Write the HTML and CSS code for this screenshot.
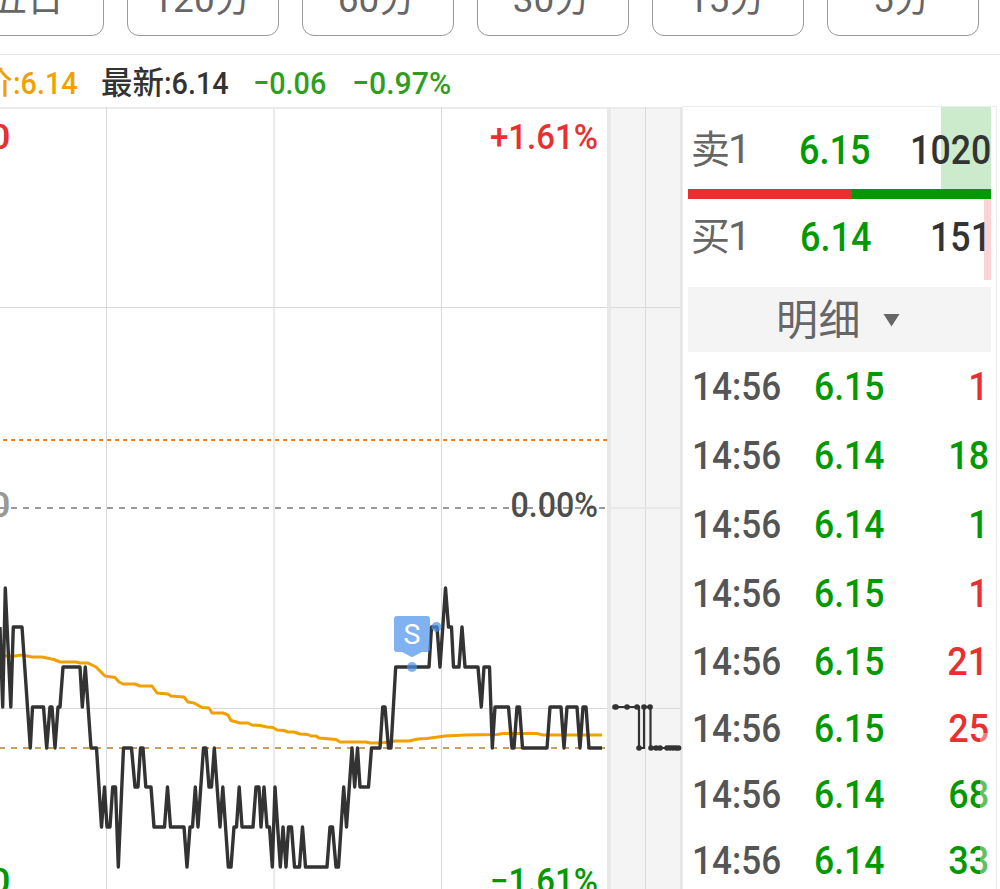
FILE: index.html
```html
<!DOCTYPE html>
<html lang="zh-CN">
<head>
<meta charset="utf-8">
<title>分时</title>
<link rel="stylesheet" href="styles.css">
</head>
<body>
<div class="app">
  <nav class="periods">
    <span class="period">五日</span>
    <span class="period">120分</span>
    <span class="period">60分</span>
    <span class="period">30分</span>
    <span class="period">15分</span>
    <span class="period">5分</span>
  </nav>
  <header class="summary">
    <span class="avg"><span class="cjk">价</span><span class="num">:6.14</span></span>
    <span class="last"><span class="cjk">最新</span><span class="num">:6.14</span></span>
    <span class="diff"><span class="num">−0.06</span></span>
    <span class="pct"><span class="num wide">−0.97%</span></span>
  </header>
  <main class="board">
    <svg class="chart" viewBox="0 106 682 783" width="682" height="783">
      <rect x="607" y="107" width="75" height="782" fill="#f4f4f4"/>
      <path class="frame" d="M0 108H682M274 107V889"/>
      <path class="grid" d="M0 307.5H682M0 708.5H682M106.5 107V889M441.5 107V889M645.5 107V889"/>
      <path d="M609 508H682" stroke="#e8e8e8" stroke-width="2"/>
      <path class="open" d="M3 440H607"/>
      <path class="prev" d="M-1 508H606"/>
      <path class="low" d="M-1 748H605"/>
      <path class="grid" d="M106.5 430V450M441.5 430V450"/>
      <rect x="607" y="107" width="4" height="782" fill="#e8e8e8"/>
      <rect x="680" y="107" width="2" height="782" fill="#e6e6e6"/>
      <polyline class="average" points="0,656 15,656 22,655 32,657 42,657 54,659.5 60,662 76,662 80,663 88,663 96,667 105,676 115,677.5 119,682 123,684 135,684 140,686 152,686 157,693 168,694 171,696 184,697 188,702 194,703 202,707.5 209,708 212,713 223,713 228,715 231,720.5 240,723 248,723 252,725 260,725.5 267,727 273,727.5 277,730 284,730.5 288,732 294,732 300,734 308,734.5 311,736 316,736 319,738 336,739.5 340,742 366,742 370,743 380,743 390,742 395,741 409,741 418,739 427,738.5 438,737 445,736 455,735.5 465,735 497,734.5 503,733.5 537,733.5 543,735 602,735"/>
      <polyline class="price" points="0,627 2.7,707 5.3,588 10.8,707 13.3,627 22,627 30.3,748 32.5,707 43.5,707 46.7,748 50,707 52,707 55,748 58,707 60,707 63,667 80,667 82.3,707 85.3,667 91,748 96.5,748 101.5,827 104.5,787 107,827 110,827 112.7,787 115.5,787 118.3,867 123.5,748 131.5,748 135,787 138,787 140.5,748 143,748 145.8,787 151,787 154,827 164.5,827 167.5,787 170.5,827 184,827 187,867 190,827 192.5,827 195.3,787 198,827 203.5,748 206,748 209,787 211.5,787 214.3,748 220,827 222.8,787 228.3,867 231,867 234,827 236.5,827 239.2,787 242,827 253,827 256,787 259,787 261,827 264,787 267,827 269.5,827 272.3,867 275,787 280.3,867 283,827 286,867 288.5,827 291.5,827 294.5,867 299.5,867 302.5,827 305.5,867 327,867 330,827 332.5,827 336,867 338.5,867 343.7,787 346.5,827 352,748 354.7,787 357.5,748 360,787 368.5,787 371.5,748 380,748 382.7,707 385,707 388.5,748 391,748 395.7,667 429,667 431.5,627 437,627 440,667 445.5,588 448.5,627 451.5,627 453.5,667 459,667 462,627 465,667 478,667 481.3,707 484,667 489.5,667 492.3,748 495,707 508.5,707 512,748 514,748 517,707 519.5,707 522.5,748 547,748 550,707 561,707 564,748 567,707 577,707 580,748 583,707 586,707 589,748 602,748"/>
      <polyline class="auction" points="615,707 639,707 639,748 644,748 644,707 650.5,707 650.5,748 679,748"/>
      <path class="ticks" d="M615 707h.1M616 707h.1M627 707h.1M637 707h.1M644 707h.1M650 707h.1M639 748h.1M651 748h.1M656 748h.1M660 748h.1M667 748h.1M670 748h.1M673 748h.1M676 748h.1M678.5 748h.1"/>
      <g class="marker">
        <path d="M397 616H427Q430 616 430 619V649Q430 652 427 652H422L414 656.3Q412 657.5 410 656.3L402 652H397Q394 652 394 649V619Q394 616 397 616Z"/>
        <circle cx="412" cy="667" r="5"/>
        <circle cx="436.5" cy="627" r="5"/>
      </g>
      <text class="sell" x="412" y="643.5" text-anchor="middle">S</text>
      <text class="axis up" x="10.5" y="149" text-anchor="end" textLength="77" lengthAdjust="spacingAndGlyphs">6.30</text>
      <text class="axis mid" x="10.5" y="517" text-anchor="end" textLength="77" lengthAdjust="spacingAndGlyphs">6.20</text>
      <text class="axis down" x="10.5" y="893" text-anchor="end" textLength="77" lengthAdjust="spacingAndGlyphs">6.10</text>
      <text class="axis up" x="490" y="149" textLength="108" lengthAdjust="spacingAndGlyphs">+1.61%</text>
      <text class="axis zero" x="510.5" y="517" textLength="87.5" lengthAdjust="spacingAndGlyphs">0.00%</text>
      <text class="axis down" x="490" y="893" textLength="108" lengthAdjust="spacingAndGlyphs">−1.61%</text>
    </svg>
    <aside class="panel">
      <div class="quote ask">
        <span class="side">卖<i>1</i></span><span class="price-num">6.15</span><span class="vol">1020</span>
      </div>
      <div class="ratio"><i class="buy"></i><i class="sellbar"></i></div>
      <div class="quote bid">
        <span class="side">买<i>1</i></span><span class="price-num">6.14</span><span class="vol">151</span>
      </div>
      <div class="tab"><span>明细</span><svg width="17" height="13" viewBox="0 0 17 13"><path d="M0.5 0H16.5L8.5 12.5Z" fill="#666"/></svg></div>
      <div class="trades">
        <div class="trade"><span>14:56</span><b>6.15</b><em class="up one">1</em></div>
        <div class="trade"><span>14:56</span><b>6.14</b><em>18</em></div>
        <div class="trade"><span>14:56</span><b>6.14</b><em class="one">1</em></div>
        <div class="trade"><span>14:56</span><b>6.15</b><em class="up one">1</em></div>
        <div class="trade"><span>14:56</span><b>6.15</b><em class="up one">21</em></div>
        <div class="trade"><span>14:56</span><b>6.15</b><em class="up">25</em></div>
        <div class="trade"><span>14:56</span><b>6.14</b><em>68</em></div>
        <div class="trade"><span>14:56</span><b>6.14</b><em>33</em></div>
        <div class="veil"></div>
      </div>
    </aside>
  </main>
</div>
</body>
</html>
```
FILE: styles.css
```css
* { box-sizing: border-box; }
body { margin: 0; background: #fff; font-family: Roboto, "Noto Sans CJK SC", sans-serif; }
.app { width: 1000px; height: 889px; overflow: hidden; display: flex; flex-direction: column; }

.periods { height: 55px; flex: none; display: flex; gap: 23px; margin-left: -48px; width: 1048px; border-bottom: 1px solid #e6e6e6; align-items: flex-end; padding-bottom: 18px; }
.period { width: 152px; height: 76px; flex: none; border: 1px solid #999; border-radius: 12px; display: flex; align-items: center; justify-content: center; font-size: 37px; line-height: 40px; color: #666; padding: 3px 2px 0 0; }

.summary { height: 51px; flex: none; display: flex; align-items: baseline; font-size: 32px; font-weight: 500; line-height: 46px; white-space: nowrap; padding-top: 2px; }
.cjk { font-family: "Noto Sans CJK SC", sans-serif; font-size: 31.5px; }
.num { display: inline-block; transform: scaleX(.9); transform-origin: left; }
.num.wide { transform: scaleX(.945); }
.avg { color: #f0a000; width: 101px; margin-left: -19px; flex: none; }
.last { color: #333; width: 152px; margin-left: 19px; flex: none; }
.diff { color: #2f9e1f; width: 99px; flex: none; }
.pct { color: #2f9e1f; }

.board { display: flex; flex: none; height: 783px; }
.chart { display: block; flex: none; }
.frame { stroke: #ebebeb; stroke-width: 2; fill: none; }
.grid { stroke: #dadada; stroke-width: 1; fill: none; }
.open { stroke: #ff7f1a; stroke-width: 2; stroke-dasharray: 4 4; }
.prev { stroke: #999; stroke-width: 2; stroke-dasharray: 6 6; }
.low { stroke: #c9a063; stroke-width: 2; stroke-dasharray: 6 6; }
.average { fill: none; stroke: #f0a000; stroke-width: 3; stroke-linejoin: round; }
.price { fill: none; stroke: #333; stroke-width: 3.4; stroke-linejoin: round; }
.auction { fill: none; stroke: #333; stroke-width: 2.2; }
.ticks { fill: none; stroke: #333; stroke-width: 5.6; stroke-linecap: round; }
.marker { fill: #4a90ea; fill-opacity: .7; }
.sell { font-size: 28.5px; font-weight: 400; fill: #fff; }
.axis { font-size: 35px; font-weight: 500; }
.axis.up { fill: #e93030; }
.axis.down { fill: #009900; }
.axis.mid { fill: #999; }
.axis.zero { fill: #4d4d4d; }

.panel { width: 315px; flex: none; border: 1px solid #ececec; border-bottom: 0; padding: 0 5px; display: flex; flex-direction: column; }
.quote { display: flex; align-items: center; font-size: 41px; font-weight: 500; flex: none; }
.ask { height: 82px; padding-top: 4px; background: linear-gradient(#cbebcc, #cbebcc) right / 50px 100% no-repeat; }
.bid { height: 81px; padding-bottom: 5px; background: linear-gradient(#fbd3d4, #fbd3d4) right / 7px 100% no-repeat; }
.side { width: 112px; padding: 0 0 8px 3px; font-family: "Noto Sans CJK SC", sans-serif; font-size: 39px; line-height: 54px; font-weight: 400; color: #666; }
.side i { font: 400 41px/1 Roboto, sans-serif; margin-left: -2px; }
.price-num { color: #090; width: 100px; transform: scaleX(.88); transform-origin: left; }
.vol { color: #333; margin-left: auto; transform: scaleX(.87); transform-origin: right; }
.ratio { display: flex; height: 10px; flex: none; }
.buy { width: 164px; background: #e93030; }
.sellbar { flex: 1; background: #090; }
.tab { height: 65px; margin-top: 7px; flex: none; background: #f4f4f4; display: flex; align-items: center; padding-left: 88px; gap: 22px; font-family: "Noto Sans CJK SC", sans-serif; font-size: 42px; line-height: 60px; color: #666; font-weight: 400; }
.tab span { padding-bottom: 5px; letter-spacing: .5px; }
.tab svg { margin-top: 2px; }
.trades { position: relative; display: grid; grid-template-rows: 69px 69px 69px 69px 67px 66px 66px 66px; }
.trade { display: flex; align-items: center; font-size: 39.5px; font-weight: 500; color: #555; padding-left: 4px; }
.trade span { width: 122px; flex: none; transform: scaleX(.89); transform-origin: left; }
.trade b { font-weight: 500; color: #090; transform: scaleX(.9); transform-origin: left; }
.trade em { font-style: normal; margin-left: auto; color: #090; padding-right: 2px; transform: scaleX(.91); transform-origin: right; }
.trade em.one { padding-right: 3px; }
.trade em.up { color: #e93030; }
.veil { position: absolute; left: 292px; top: 381px; width: 14px; height: 160px; background: rgba(255,255,255,.38); }
```
